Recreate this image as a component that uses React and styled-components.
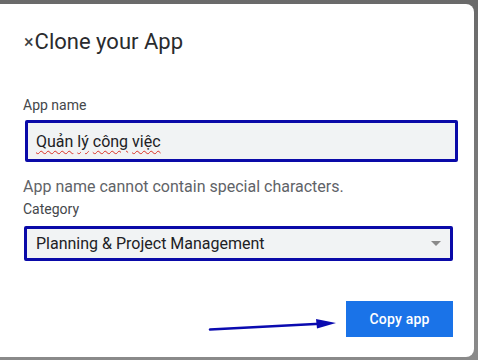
import React from "react";
import styled, { createGlobalStyle } from "styled-components";

const GlobalStyle = createGlobalStyle`
  html, body {
    margin: 0;
    padding: 0;
    background: #6f6f6f;
    font-family: Roboto, "Liberation Sans", Arial, sans-serif;
  }
`;

const Backdrop = styled.div`
  width: 478px;
  height: 360px;
  padding-top: 4px;
  box-sizing: border-box;
  overflow: hidden;
  background: linear-gradient(#6a6a6a, #8a8a8a);
`;

const Dialog = styled.div`
  width: 474px;
  height: 353px;
  background: #fff;
  border-radius: 0 8px 8px 0;
  box-sizing: border-box;
  padding: 24px 21px 0 24px;
  display: flex;
  flex-direction: column;
`;

const Title = styled.h2`
  margin: 0;
  font-family: Roboto, "Open Sans", sans-serif;
  font-weight: 400;
  font-size: 22px;
  line-height: 28px;
  color: #2a2b2e;
  display: flex;
  align-items: center;
`;

const Close = styled.span`
  font-size: 18px;
  margin-right: 1px;
  color: #3c4043;
`;

const Label = styled.div`
  margin-top: ${(p) => p.$top}px;
  margin-left: -1px;
  font-size: 14px;
  line-height: 18px;
  color: #44474b;
`;

const Field = styled.div`
  width: ${(p) => p.$width}px;
  height: ${(p) => p.$height}px;
  margin-top: ${(p) => p.$top}px;
  margin-left: ${(p) => p.$left}px;
  box-sizing: border-box;
  border: 3px solid #0a0aa8;
  border-radius: 2px;
  background: #f1f3f4;
  display: flex;
  align-items: center;
  justify-content: space-between;
  padding: 0 9px 0 ${(p) => 9 - p.$left}px;
  font-size: 16px;
  color: #202124;
`;

const Misspelled = styled.span`
  text-decoration: underline wavy #d93025;
  text-decoration-thickness: 1px;
  text-underline-offset: 3px;
`;

const Helper = styled.div`
  margin-top: 15px;
  margin-left: -1px;
  font-size: 16px;
  line-height: 20px;
  color: #5f6368;
`;

const Caret = styled.span`
  width: 0;
  height: 0;
  border-left: 5px solid transparent;
  border-right: 5px solid transparent;
  border-top: 5px solid #8a8a8a;
`;

const Footer = styled.div`
  margin-top: 39px;
  display: flex;
  justify-content: flex-end;
  align-items: center;
  gap: 8px;
`;

const CopyButton = styled.button`
  width: 107px;
  height: 36px;
  border: none;
  border-radius: 0;
  background: #1a73e8;
  color: #fff;
  font-family: Roboto, sans-serif;
  font-weight: 500;
  font-size: 14px;
  letter-spacing: 0.2px;
`;

const Arrow = () => (
  <svg width="130" height="36" viewBox="0 0 130 36" style={{ marginTop: 1 }}>
    <path d="M2 28.5 L112 22.8" stroke="#0b0bb0" strokeWidth="2.6" strokeLinecap="round" fill="none" />
    <path d="M108 18 L128 22 L109 27.5 Z" fill="#0b0bb0" />
  </svg>
);

export default function App() {
  return (
    <>
      <GlobalStyle />
      <Backdrop>
        <Dialog>
          <Title>
            <Close>×</Close>Clone your App
          </Title>
          <Label $top={40}>App name</Label>
          <Field $width={433} $height={42} $top={6} $left={1}>
            <span>
              <Misspelled>Quản</Misspelled> <Misspelled>lý</Misspelled>{" "}
              <Misspelled>công</Misspelled> <Misspelled>việc</Misspelled>
            </span>
          </Field>
          <Helper>App name cannot contain special characters.</Helper>
          <Label $top={3}>Category</Label>
          <Field $width={429} $height={35} $top={8} $left={0}>
            <span>Planning &amp; Project Management</span>
            <Caret />
          </Field>
          <Footer>
            <Arrow />
            <CopyButton>Copy app</CopyButton>
          </Footer>
        </Dialog>
      </Backdrop>
    </>
  );
}
